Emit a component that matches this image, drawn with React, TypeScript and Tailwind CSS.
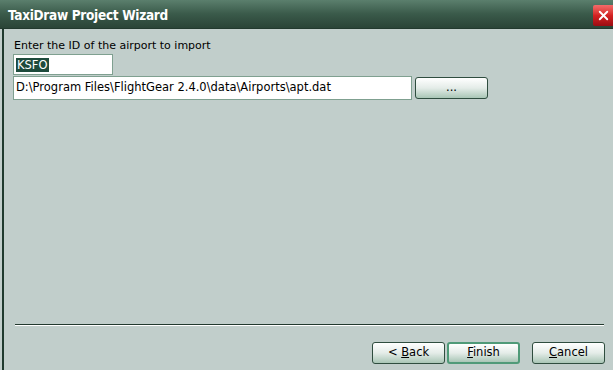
import { X } from 'lucide-react';

const font = { fontFamily: 'Tahoma, "DejaVu Sans", "Liberation Sans", sans-serif' };

function WizButton({ label, accel, rest, pre = '', primary = false }: { label?: string; accel?: string; rest?: string; pre?: string; primary?: boolean }) {
  return (
    <button
      className={`h-[22px] w-[73px] rounded-[3px] bg-gradient-to-b from-[#ffffff] via-[#e4ece8] to-[#a9c6b6] text-[11.5px] text-black flex items-center justify-center ${
        primary ? 'border-2 border-[#4f9a78]' : 'border border-[#2f4d3f]'
      }`}
    >
      {label ?? (
        <span>
          {pre}
          <span className="underline">{accel}</span>
          {rest}
        </span>
      )}
    </button>
  );
}

export default function App() {
  return (
    <div className="w-[613px] h-[370px] overflow-hidden bg-[#c1cecb] flex flex-col" style={font}>
      {/* Title bar */}
      <div className="h-[29px] shrink-0 flex items-center justify-between bg-gradient-to-b from-[#5b7f6d] via-[#3a5a4a] to-[#2a4437] border-b border-[#22392e] pl-[8px]">
        <span className="text-white font-bold text-[13.5px] tracking-[-0.3px] mt-[2px]" style={{ fontFamily: '"DejaVu Sans Condensed", "Liberation Sans", sans-serif' }}>
          TaxiDraw Project Wizard
        </span>
        <div className="w-[20px] h-[21px] bg-gradient-to-b from-[#f36a6a] via-[#d42222] to-[#9b0c12] flex items-center justify-center rounded-l-[2px] mt-[2px]">
          <X className="w-[15px] h-[15px] text-white" strokeWidth={3} />
        </div>
      </div>

      {/* Body */}
      <div className="flex-1 flex ml-[2px] border-l-2 border-[#1f3a2e]">
        <div className="flex-1 flex flex-col pl-[9px] pr-[8px]">
          <div className="text-[11px] text-black leading-none mt-[11px] mb-[3px] pl-[1px]">Enter the ID of the airport to import</div>
          <div className="w-[100px] h-[21px] bg-white border border-[#7fa090] flex items-center pl-[2px]">
            <span className="bg-[#1e4b3c] text-white text-[11.5px] leading-[14px] px-[1px]">KSFO</span>
          </div>
          <div className="flex items-center gap-[3px] mt-[1px]">
            <div className="w-[399px] h-[24px] bg-white border border-[#7fa090] flex items-center pl-[2px] text-[11.5px] text-black">
              D:\Program Files\FlightGear 2.4.0\data\Airports\apt.dat
            </div>
            <WizButton label="..." />
          </div>

          <div className="flex-1" />

          <div className="ml-[2px] mr-[1px] border-t border-[#22392e] border-b border-b-white" />

          <div className="flex justify-end items-center mt-[16px] mb-[6px]">
            <WizButton pre="< " accel="B" rest="ack" />
            <div className="w-[2px]" />
            <WizButton accel="F" rest="inish" primary />
            <div className="w-[12px]" />
            <WizButton accel="C" rest="ancel" />
          </div>
        </div>
      </div>
    </div>
  );
}
